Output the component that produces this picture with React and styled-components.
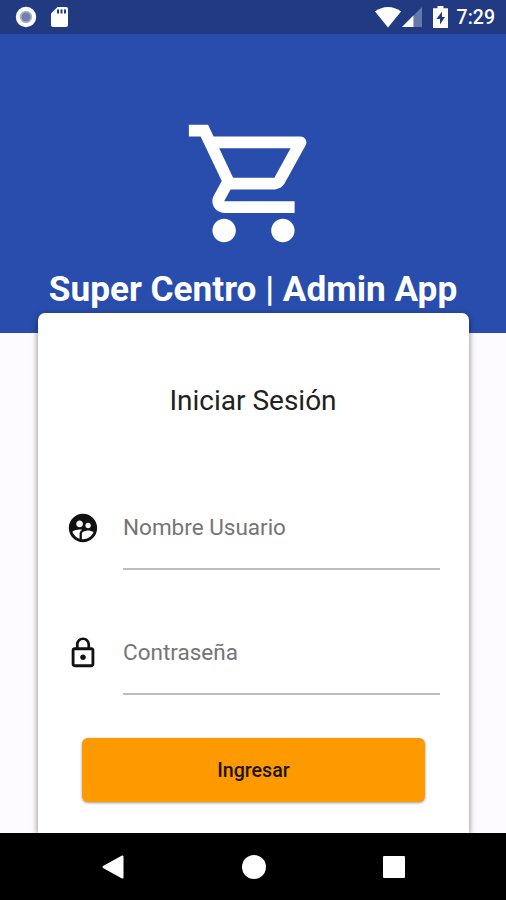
import React from 'react'
import styled, { createGlobalStyle } from 'styled-components';
import { MdOutlineShoppingCart, MdSupervisedUserCircle, MdLockOutline } from 'react-icons/md';

const GlobalStyle = createGlobalStyle`
*{box-sizing:border-box;}
body{
margin:0;
font-family:Roboto, sans-serif;
background-color:#fdfbff;
}
`;

const Container = styled.div`
height:900px;
display:flex;
flex-direction:column;
overflow:hidden;
background-color:#fdfbff;
`;

const StatusBar = styled.div`
height:34px;
flex:none;
padding:0 11px 0 15px;
display:flex;
align-items:center;
justify-content:space-between;
background-color:#213a82;
`;
const StatusGroup = styled.div`
height:100%;
display:flex;
align-items:center;
`;
const StatusIcon = styled.svg`
display:block;
flex:none;
margin-left:${props => props.$gap || 0}px;
`;
const Clock = styled.span`
margin-left:9px;
padding-top:2px;
font-size:19.5px;
font-weight:500;
line-height:24px;
color:white;
`;

const Header = styled.header`
height:299px;
flex:none;
padding-top:79px;
display:flex;
flex-direction:column;
align-items:center;
background-color:#284dac;
color:white;
`;
const Title = styled.h1`
margin:14px 0 0;
font-size:35.2px;
font-weight:700;
line-height:42px;
white-space:nowrap;
`;

const Card = styled.main`
position:relative;
height:520px;
flex:none;
margin:-20px 37px 0 38px;
padding:71px 29px 0 28px;
border-radius:7px 7px 0 0;
background-color:white;
box-shadow:0 2px 6px rgba(0,0,0,0.5);
`;
const CardTitle = styled.h2`
margin:0;
font-size:28px;
font-weight:400;
line-height:34px;
text-align:center;
color:#212121;
`;

const Form = styled.form`
display:flex;
flex-direction:column;
margin-top:68px;
`;
const Field = styled.label`
height:83px;
display:flex;
align-items:center;
margin-bottom:42px;
color:#111;
`;
const Input = styled.input`
flex:1;
min-width:0;
height:84px;
margin:1px 0 0 23px;
padding:0 0 1px;
border:none;
border-bottom:2px solid #bdbdbd;
outline:none;
background:none;
font-family:inherit;
font-size:22.5px;
color:#212121;
&::placeholder {color:#757575; opacity:1;}
`;
const Button = styled.button`
height:64px;
margin:2px 15px 0 16px;
border:none;
border-radius:6px;
background-color:#ff9900;
box-shadow:0 1px 3px rgba(0,0,0,0.4);
font-family:inherit;
font-size:19.6px;
font-weight:500;
color:#1c1408;
cursor:pointer;
`;

const NavBar = styled.nav`
position:relative;
height:67px;
flex:none;
padding:0 101px 0 102px;
display:flex;
align-items:center;
justify-content:space-between;
background-color:black;
`;

const App = () => {
    return (
        <>
            <GlobalStyle />
            <Container>
                <StatusBar>
                    <StatusGroup>
                        <StatusIcon width="22" height="22" viewBox="0 0 22 22">
                            <circle cx="11" cy="11" r="8.2" fill="#aab2cf" stroke="white" strokeWidth="4" />
                            <circle cx="11" cy="11" r="4.5" fill="#7480b0" />
                        </StatusIcon>
                        <StatusIcon $gap={14} width="18" height="22" viewBox="0 0 18 22">
                            <path d="M6.500 1H15a2 2 0 0 1 2 2v16a2 2 0 0 1-2 2H2a2 2 0 0 1-2-2V7.500z" fill="white" />
                            <path d="M6 3.500h2v4H6zM9.500 3.500h2v4h-2zM13 3.500h2v4h-2z" fill="#213a82" />
                        </StatusIcon>
                    </StatusGroup>
                    <StatusGroup>
                        <StatusIcon width="26" height="22" viewBox="0 0 26 22">
                            <path d="M0 5.500C7.500-.5 18.500-.5 26 5.500L13 21.500z" fill="white" />
                        </StatusIcon>
                        <StatusIcon $gap={1} width="20" height="20" viewBox="0 0 21 21">
                            <path d="M0 21L21 0v21z" fill="#6778ab" />
                            <path d="M0 21L12 9v12z" fill="white" />
                        </StatusIcon>
                        <StatusIcon $gap={11} width="15" height="22" viewBox="0 0 15 22">
                            <path d="M4.500 0h6v2.200H15V22H0V2.200h4.500z" fill="white" />
                            <path d="M9 5.500L3.500 13H7v5.500L12 11H9z" fill="#213a82" />
                        </StatusIcon>
                        <Clock>7:29</Clock>
                    </StatusGroup>
                </StatusBar>
                <Header>
                    <MdOutlineShoppingCart size={141} />
                    <Title>Super Centro | Admin App</Title>
                </Header>
                <Card>
                    <CardTitle>Iniciar Sesión</CardTitle>
                    <Form>
                        <Field>
                            <MdSupervisedUserCircle size={34} />
                            <Input placeholder="Nombre Usuario" />
                        </Field>
                        <Field>
                            <MdLockOutline size={34} />
                            <Input type="password" placeholder="Contraseña" />
                        </Field>
                        <Button type="button">Ingresar</Button>
                    </Form>
                </Card>
                <NavBar>
                    <svg width="22" height="24" viewBox="0 0 22 24">
                        <path d="M20.500 1.500v21L1.500 12z" fill="white" stroke="white" strokeWidth="2" strokeLinejoin="round" />
                    </svg>
                    <svg width="24" height="24" viewBox="0 0 24 24">
                        <circle cx="12" cy="12" r="12" fill="white" />
                    </svg>
                    <svg width="22" height="22" viewBox="0 0 22 22">
                        <rect width="22" height="22" rx="1" fill="white" />
                    </svg>
                </NavBar>
            </Container>
        </>
    )
}

export default App
